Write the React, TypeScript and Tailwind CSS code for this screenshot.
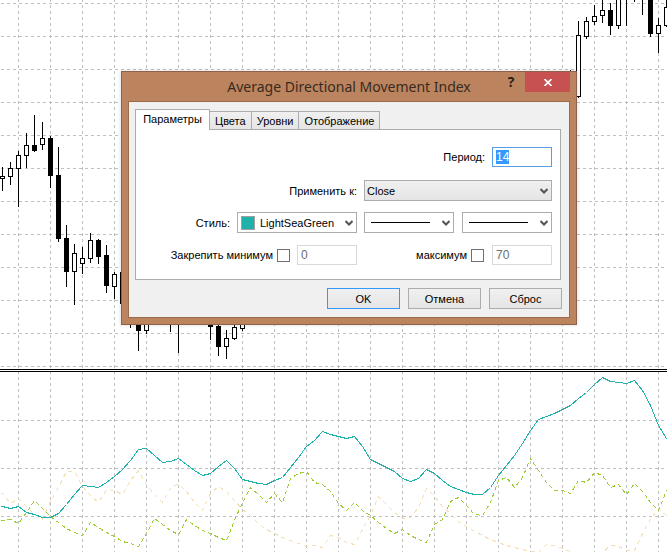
import React, { useEffect, useRef } from "react";

type Candle = { x: number; high: number; low: number; top: number; bottom: number; down?: boolean };

const candles: Candle[] = [
  { x: 2, high: 167, low: 190, top: 176, bottom: 178 },
  { x: 10, high: 162, low: 184, top: 168, bottom: 176 },
  { x: 18, high: 151, low: 206, top: 155, bottom: 168 },
  { x: 26, high: 133, low: 167, top: 145, bottom: 155 },
  { x: 34, high: 115, low: 151, top: 145, bottom: 150, down: true },
  { x: 42, high: 122, low: 149, top: 138, bottom: 144 },
  { x: 50, high: 136, low: 187, top: 138, bottom: 175, down: true },
  { x: 58, high: 147, low: 241, top: 175, bottom: 238, down: true },
  { x: 66, high: 225, low: 286, top: 238, bottom: 271, down: true },
  { x: 74, high: 244, low: 304, top: 253, bottom: 271 },
  { x: 82, high: 247, low: 273, top: 258, bottom: 263 },
  { x: 90, high: 233, low: 262, top: 240, bottom: 258 },
  { x: 98, high: 239, low: 263, top: 240, bottom: 256, down: true },
  { x: 106, high: 245, low: 292, top: 255, bottom: 285, down: true },
  { x: 114, high: 272, low: 298, top: 274, bottom: 286 },
  { x: 122, high: 270, low: 310, top: 272, bottom: 303, down: true },
  { x: 130, high: 290, low: 327, top: 300, bottom: 320, down: true },
  { x: 138, high: 300, low: 350, top: 310, bottom: 330, down: true },
  { x: 146, high: 300, low: 333, top: 312, bottom: 330 },
  { x: 170, high: 290, low: 331, top: 300, bottom: 318 },
  { x: 178, high: 290, low: 352, top: 300, bottom: 318 },
  { x: 210, high: 300, low: 339, top: 310, bottom: 326, down: true },
  { x: 218, high: 323, low: 355, top: 326, bottom: 346, down: true },
  { x: 226, high: 330, low: 358, top: 338, bottom: 346 },
  { x: 234, high: 320, low: 339, top: 327, bottom: 338 },
  { x: 242, high: 310, low: 330, top: 314, bottom: 328 },
  { x: 570, high: 70, low: 110, top: 80, bottom: 100, down: true },
  { x: 578, high: 21, low: 97, top: 35, bottom: 96 },
  { x: 586, high: 17, low: 38, top: 21, bottom: 36 },
  { x: 594, high: 5, low: 24, top: 16, bottom: 21 },
  { x: 602, high: -4, low: 22, top: 10, bottom: 15 },
  { x: 610, high: 3, low: 34, top: 10, bottom: 25, down: true },
  { x: 618, high: -4, low: 28, top: -4, bottom: 25 },
  { x: 626, high: -9, low: 25, top: -9, bottom: -4 },
  { x: 634, high: -9, low: 1, top: -9, bottom: -4 },
  { x: 642, high: -9, low: 14, top: -9, bottom: -4 },
  { x: 650, high: -9, low: 36, top: -9, bottom: 33, down: true },
  { x: 658, high: 18, low: 52, top: 25, bottom: 33 },
  { x: 666, high: -4, low: 26, top: 7, bottom: 25 },
];

// one value per bar, bars are 8px apart starting at x = 2
const adx = [
  506, 508, 506, 512, 514, 517, 517, 513, 504, 494, 485, 486, 487, 482, 476, 469, 460, 449, 448, 455, 462, 461, 458,
  464, 470, 475, 473, 466, 460, 468, 479, 481, 483, 484, 480, 477, 467, 457, 446, 440, 431, 434, 436, 438, 436, 446,
  459, 463, 467, 471, 478, 481, 478, 469, 473, 480, 486, 489, 492, 494, 494, 487, 475, 465, 455, 443, 430, 419, 416,
  413, 409, 405, 398, 392, 384, 377, 381, 382, 383, 380, 390, 405, 425, 438, 444,
];
const plusDi = [
  520, 519, 523, 512, 500, 508, 516, 522, 528, 532, 535, 522, 527, 532, 536, 541, 543, 546, 533, 518, 524, 530, 534,
  519, 525, 530, 533, 537, 540, 520, 502, 487, 494, 502, 493, 502, 478, 473, 471, 482, 484, 491, 503, 510, 502, 510,
  515, 522, 528, 533, 529, 535, 539, 542, 524, 519, 501, 497, 505, 514, 515, 502, 480, 477, 487, 477, 458, 470, 482,
  490, 490, 493, 480, 482, 472, 475, 487, 484, 494, 483, 491, 502, 510, 490, 480,
];
const minusDi = [
  493, 503, 498, 506, 514, 519, 501, 487, 471, 471, 486, 495, 502, 489, 490, 494, 480, 470, 484, 494, 502, 488, 483,
  491, 502, 510, 493, 486, 491, 500, 509, 515, 523, 529, 533, 537, 540, 543, 546, 545, 547, 535, 537, 542, 544, 529,
  515, 496, 504, 512, 518, 517, 507, 488, 496, 506, 513, 521, 526, 531, 535, 539, 542, 545, 547, 549, 551, 552, 544,
  545, 548, 551, 553, 554, 554, 552, 545, 546, 550, 550, 533, 519, 508, 515, 520,
];

const gridX = Array.from({ length: 21 }, (_, i) => 18 + i * 32);
const priceGridY = Array.from({ length: 12 }, (_, i) => 3 + i * 33);
const indicatorGridY = [420, 468, 516];

const toPoints = (values: number[]) =>
  [`0,${values[0]}`, ...values.map((v, i) => `${2 + i * 8},${v}`)].join(" ");

function Grid({ top, bottom, rows }: { top: number; bottom: number; rows: number[] }) {
  return (
    <g stroke="#c0c0c0" strokeDasharray="3 3">
      {gridX.map((x) => (
        <line key={x} x1={x + 0.5} x2={x + 0.5} y1={top - 1} y2={bottom} />
      ))}
      {rows.map((y) => (
        <line key={y} x1={1} x2={667} y1={y + 0.5} y2={y + 0.5} />
      ))}
    </g>
  );
}

function PriceChart() {
  return (
    <svg viewBox="0 0 667 369" className="block h-auto w-full" shapeRendering="crispEdges" aria-hidden="true">
      <Grid top={0} bottom={369} rows={priceGridY} />
      {candles.map((c) => (
        <g key={c.x}>
          <rect x={c.x} y={c.high} width={1} height={c.low - c.high + 1} fill="#000" />
          <rect
            x={c.x - 1.5}
            y={c.top + 0.5}
            width={4}
            height={c.bottom - c.top}
            fill={c.down ? "#000" : "#fff"}
            stroke="#000"
          />
        </g>
      ))}
    </svg>
  );
}

function IndicatorChart() {
  return (
    <svg viewBox="0 372 667 180" className="block h-auto w-full" shapeRendering="crispEdges" aria-hidden="true">
      <Grid top={372} bottom={552} rows={indicatorGridY} />
      <g fill="none" transform="translate(0.5 0.5)">
        <polyline points={toPoints(minusDi)} stroke="#f5deb3" strokeDasharray="4 4" />
        <polyline points={toPoints(plusDi)} stroke="#9acd32" strokeDasharray="4 3" />
        <polyline points={toPoints(adx)} stroke="#20b2aa" />
      </g>
    </svg>
  );
}

function Chevron() {
  return (
    <svg
      width="8"
      height="6"
      viewBox="0 0 8 6"
      className="pointer-events-none absolute inset-y-0 right-1 my-auto"
      aria-hidden="true"
    >
      <path d="M0.5 1 L4 4.5 L7.5 1" fill="none" stroke="#555" strokeWidth="2" />
    </svg>
  );
}

const selectClass = "h-[21px] w-full appearance-none border border-[#acacac] text-black outline-none";
const inputClass = "h-5 w-[60px] border px-[3px] pb-[1px] text-[12px] outline-none";

function LineSelect({ label }: { label: string }) {
  return (
    <div className="relative w-[90px]">
      <select aria-label={label} className={`${selectClass} bg-white`}>
        <option value="solid" />
      </select>
      <div className="pointer-events-none absolute inset-y-0 left-[7px] my-auto h-px w-[59px] bg-black" />
      <Chevron />
    </div>
  );
}

const tabs = ["Цвета", "Уровни", "Отображение"];

export default function App() {
  const periodRef = useRef<HTMLInputElement>(null);

  useEffect(() => {
    periodRef.current?.focus();
    periodRef.current?.select();
  }, []);

  return (
    <main className="relative overflow-hidden bg-white">
      <PriceChart />
      <div className="h-[3px] border-y border-black" />
      <IndicatorChart />

      {/* Indicator settings window */}
      <div
        role="dialog"
        aria-labelledby="dialog-title"
        className="absolute left-[121px] top-[71px] w-[456px] border border-[#8e6249] bg-[#bb845e] px-[6px] pb-[6px] font-['Liberation_Sans',Arial,sans-serif] text-[11px] leading-[14px] text-black shadow-[0_0_4px_rgba(0,0,0,0.15)]"
      >
        <div className="relative flex h-[29px] items-center justify-center">
          <h1
            id="dialog-title"
            className="font-['Noto_Sans','Segoe_UI',sans-serif] text-[14px] leading-5 text-[#382a20]"
          >
            Average Directional Movement Index
          </h1>
          <div className="absolute right-0 top-0 flex h-5">
            <button
              type="button"
              aria-label="Справка"
              className="w-7 font-['Open_Sans',sans-serif] text-[14px] font-bold leading-5 text-[#2b211a]"
            >
              ?
            </button>
            <button type="button" aria-label="Закрыть" className="flex w-[45px] items-center justify-center bg-[#c75050]">
              <svg width="8" height="7" viewBox="0 0 8 7" aria-hidden="true">
                <path d="M0.5 0 L7.5 7 M7.5 0 L0.5 7" stroke="#fff" strokeWidth="1.6" />
              </svg>
            </button>
          </div>
        </div>

        <div className="border border-[#9c6b4c] bg-[#f0f0f0] pb-2 pl-[6px] pr-[7px] pt-[7px]">
          <div role="tablist" className="flex items-end">
            <button
              type="button"
              role="tab"
              aria-selected="true"
              className="relative -mb-px h-[21px] w-[75px] border border-b-0 border-[#acacac] bg-white pb-[2px]"
            >
              Параметры
            </button>
            {tabs.map((tab) => (
              <button
                key={tab}
                type="button"
                role="tab"
                aria-selected="false"
                className="h-[18px] border border-b-0 border-l-0 border-[#acacac] bg-linear-to-b from-[#f0f0f0] to-[#e5e5e5] px-[5px]"
              >
                {tab}
              </button>
            ))}
          </div>

          <form className="mr-px border border-[#acacac] bg-white px-2 pb-[14px] pt-[17px]">
            <div className="flex items-center justify-end gap-[7px]">
              <label htmlFor="period">Период:</label>
              <input
                id="period"
                ref={periodRef}
                defaultValue="14"
                className={`${inputClass} border-[#569de5] selection:bg-[#3399ff] selection:text-white`}
              />
            </div>

            <div className="mt-[13px] flex items-center justify-end gap-[7px]">
              <label htmlFor="apply">Применить к:</label>
              <div className="relative w-[188px]">
                <select
                  id="apply"
                  className={`${selectClass} bg-linear-to-b from-[#f0f0f0] to-[#e5e5e5] px-[2px]`}
                >
                  <option>Close</option>
                </select>
                <Chevron />
              </div>
            </div>

            <div className="mt-[11px] flex items-center justify-end gap-[7px]">
              <label htmlFor="color">Стиль:</label>
              <div className="relative w-[120px]">
                <select id="color" className={`${selectClass} bg-white pl-[22px]`}>
                  <option>LightSeaGreen</option>
                </select>
                <span className="pointer-events-none absolute inset-y-0 left-1 my-auto size-[14px] border border-[#a0a0a0] bg-[#20b2aa]" />
                <Chevron />
              </div>
              <div className="flex gap-2">
                <LineSelect label="Тип линии" />
                <LineSelect label="Толщина линии" />
              </div>
            </div>

            <div className="mt-3 flex items-center justify-end">
              <label htmlFor="fix-min">Закрепить минимум</label>
              <input
                id="fix-min"
                type="checkbox"
                className="ml-1 mr-[7px] size-[13px] appearance-none border border-[#707070] bg-white"
              />
              <input
                aria-label="Минимум"
                disabled
                defaultValue="0"
                className={`${inputClass} border-[#d9d9d9] text-[#6d6d6d]`}
              />
              <div className="flex w-[195px] items-center justify-end">
                <label htmlFor="fix-max">максимум</label>
                <input
                  id="fix-max"
                  type="checkbox"
                  className="ml-1 mr-2 size-[13px] appearance-none border border-[#707070] bg-white"
                />
                <input
                  aria-label="Максимум"
                  disabled
                  defaultValue="70"
                  className={`${inputClass} border-[#d9d9d9] text-[#6d6d6d]`}
                />
              </div>
            </div>
          </form>

          <div className="mt-2 flex justify-end gap-2">
            <button
              type="button"
              className="h-[21px] w-[73px] border border-[#3399ff] bg-linear-to-b from-[#f0f0f0] to-[#e5e5e5]"
            >
              OK
            </button>
            <button
              type="button"
              className="h-[21px] w-[73px] border border-[#acacac] bg-linear-to-b from-[#f0f0f0] to-[#e5e5e5]"
            >
              Отмена
            </button>
            <button
              type="button"
              className="h-[21px] w-[73px] border border-[#acacac] bg-linear-to-b from-[#f0f0f0] to-[#e5e5e5]"
            >
              Сброс
            </button>
          </div>
        </div>
      </div>
    </main>
  );
}
